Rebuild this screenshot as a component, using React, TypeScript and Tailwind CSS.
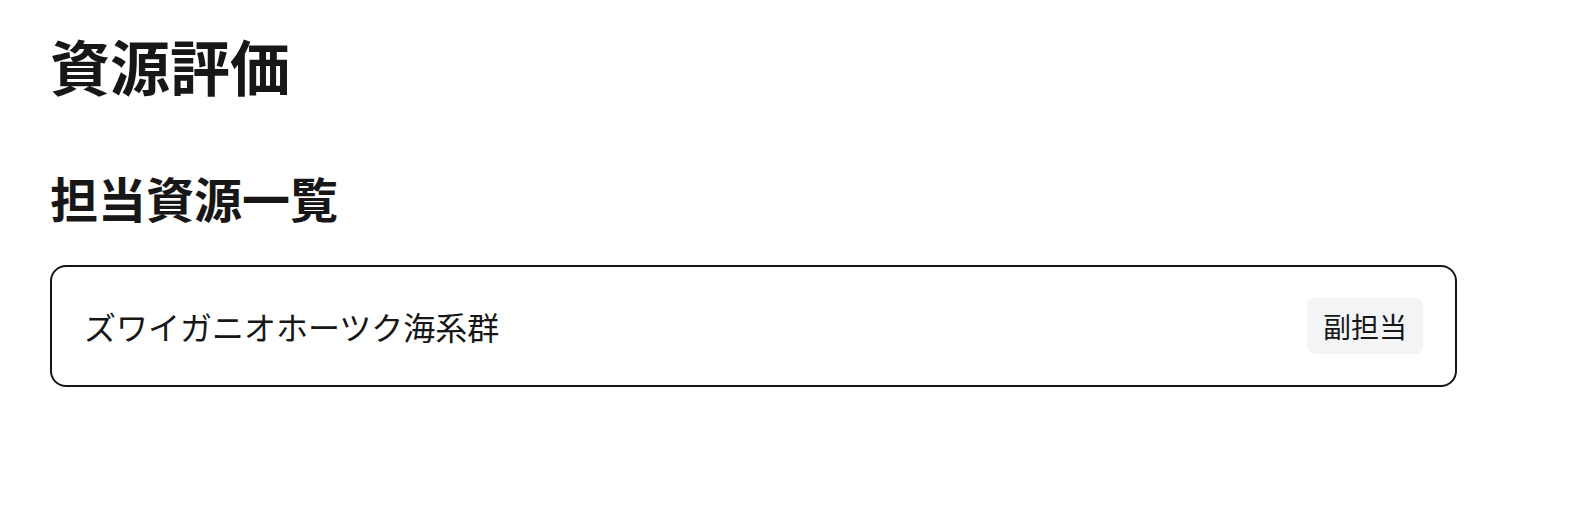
export default function App() {
  return (
    <div
      className="min-h-screen bg-white text-[#171717] px-[50px] pt-[29px]"
      style={{ fontFamily: '"Noto Sans CJK JP", "Noto Sans", sans-serif' }}
    >
      <h1 className="text-[60px] leading-[72px] font-bold">資源評価</h1>
      <h2 className="mt-[64px] text-[48px] leading-[64px] font-bold">担当資源一覧</h2>
      <div className="mt-[36px] w-[1407px] flex items-center justify-between rounded-[16px] border-2 border-[#171717] px-[32px] py-[31px]">
        <span className="text-[32px] leading-[40px]">ズワイガニオホーツク海系群</span>
        <span className="rounded-[8px] bg-gray-100 px-[16px] py-[8px] text-[28px] leading-[40px]">副担当</span>
      </div>
    </div>
  );
}
